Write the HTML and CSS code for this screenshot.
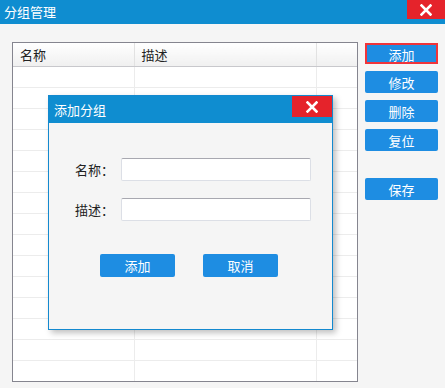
FILE: index.html
```html
<!DOCTYPE html>
<html lang="zh-CN">
<head>
    <meta charset="UTF-8">
    <title>分组管理</title>
    <link rel="stylesheet" href="styles.css">
</head>
<body>
    <div class="window">
        <div class="title-bar">
            <span class="title">分组管理</span>
            <button class="close-btn main-close" aria-label="关闭">
                <svg width="12" height="12" viewBox="0 0 12 12"><path d="M1.5 1.5 L10.5 10.5 M10.5 1.5 L1.5 10.5" stroke="#fff" stroke-width="2.6" stroke-linecap="square"/></svg>
            </button>
        </div>

        <div class="content">
            <div class="grid">
                <table class="grid-table">
                    <colgroup>
                        <col class="col-name">
                        <col class="col-desc">
                        <col>
                    </colgroup>
                    <thead>
                        <tr><th>名称</th><th>描述</th><th></th></tr>
                    </thead>
                    <tbody id="gridBody"></tbody>
                </table>
            </div>

            <div class="actions">
                <button class="btn active">添加</button>
                <button class="btn">修改</button>
                <button class="btn">删除</button>
                <button class="btn">复位</button>
                <button class="btn save">保存</button>
            </div>
        </div>

        <div class="dialog">
            <div class="dialog-title">
                <span>添加分组</span>
                <button class="close-btn dialog-close" aria-label="关闭">
                    <svg width="12" height="12" viewBox="0 0 12 12"><path d="M1.5 1.5 L10.5 10.5 M10.5 1.5 L1.5 10.5" stroke="#fff" stroke-width="2.6" stroke-linecap="square"/></svg>
                </button>
            </div>
            <div class="dialog-body">
                <div class="form-row">
                    <label>名称<span class="colon">：</span></label>
                    <input type="text" class="field">
                </div>
                <div class="form-row">
                    <label>描述<span class="colon">：</span></label>
                    <input type="text" class="field">
                </div>
                <div class="dialog-buttons">
                    <button class="btn wide">添加</button>
                    <button class="btn wide">取消</button>
                </div>
            </div>
        </div>
    </div>

    <script>
        const body = document.getElementById('gridBody');
        for (let i = 0; i < 15; i++) {
            const row = document.createElement('tr');
            row.innerHTML = '<td></td><td></td><td></td>';
            body.appendChild(row);
        }
    </script>
</body>
</html>
```

FILE: styles.css
```css
:root {
    --title-blue: #0f8dd0;
    --btn-blue: #1e8de2;
    --close-red: #e5232b;
    --bg: #f5f5f5;
    --font-main: "Noto Sans CJK SC", "Noto Sans", sans-serif;
}

html, body {
    margin: 0;
    height: 100%;
    background: var(--bg);
    font-family: var(--font-main);
    font-size: 12px;
    color: #222;
}

.window {
    position: relative;
    width: 445px;
    height: 388px;
    overflow: hidden;
}

.title-bar {
    height: 24px;
    background: var(--title-blue);
    display: flex;
    justify-content: space-between;
    align-items: flex-start;
}

.title {
    color: #fff;
    font-size: 13px;
    line-height: 23px;
    padding-left: 4px;
}

.close-btn {
    border: none;
    padding: 0;
    background: var(--close-red);
    display: flex;
    justify-content: center;
    align-items: center;
    cursor: pointer;
}

.main-close {
    width: 38px;
    height: 19px;
}

.content {
    display: flex;
    align-items: flex-start;
    padding: 18px 0 0 12px;
    gap: 7px;
}

.grid {
    width: 344px;
    height: 338px;
    border: 1px solid #85858f;
    background: #fff;
    overflow: hidden;
}

.grid-table {
    width: 344px;
    table-layout: fixed;
    border-collapse: collapse;
}

.col-name { width: 121px; }
.col-desc { width: 182px; }

.grid-table th {
    height: 23px;
    padding: 0 0 0 7px;
    text-align: left;
    font-weight: normal;
    font-size: 13px;
    background: linear-gradient(#ffffff, #f0f0f0);
    border-right: 1px solid #e2e2e2;
    border-bottom: 1px solid #c8c8cc;
}

.grid-table td {
    height: 20px;
    padding: 0;
    border-right: 1px solid #ececec;
    border-bottom: 1px solid #ececec;
}

.grid-table tr > :last-child {
    border-right: none;
}

.actions {
    display: flex;
    flex-direction: column;
    gap: 7px;
    margin-top: 1px;
}

.btn {
    font-family: var(--font-main);
    font-size: 13px;
    color: #fff;
    background: var(--btn-blue);
    border: none;
    border-radius: 2px;
    width: 73px;
    height: 22px;
    padding: 0;
    cursor: pointer;
}

.btn.active {
    border: 2px solid #f0343a;
    border-radius: 0;
    height: 21px;
}

.btn.save {
    margin-top: 20px;
}

.dialog {
    position: absolute;
    left: 48px;
    top: 95px;
    width: 283px;
    height: 233px;
    border: 1px solid #1389cf;
    background: var(--bg);
    box-shadow: 3px 3px 6px rgba(0, 0, 0, 0.25);
}

.dialog-title {
    height: 27px;
    background: var(--title-blue);
    display: flex;
    justify-content: space-between;
    align-items: flex-start;
}

.dialog-title span {
    color: #fff;
    font-size: 13px;
    line-height: 27px;
    padding-left: 5px;
}

.dialog-close {
    width: 40px;
    height: 21px;
}

.dialog-body {
    padding: 35px 0 0 26px;
}

.form-row {
    display: flex;
    align-items: center;
    margin-bottom: 17px;
}

.form-row label {
    width: 46px;
    font-size: 13px;
}

.colon {
    font-family: "Noto Sans CJK TC", sans-serif;
}

.field {
    box-sizing: border-box;
    width: 190px;
    height: 23px;
    border: 1px solid #dcdfe6;
    border-top-color: #a8a8b0;
    border-radius: 2px;
    background: #fff;
    outline: none;
}

.dialog-buttons {
    display: flex;
    gap: 28px;
    margin: 33px 0 0 25px;
}

.btn.wide {
    width: 75px;
    height: 23px;
}
```
